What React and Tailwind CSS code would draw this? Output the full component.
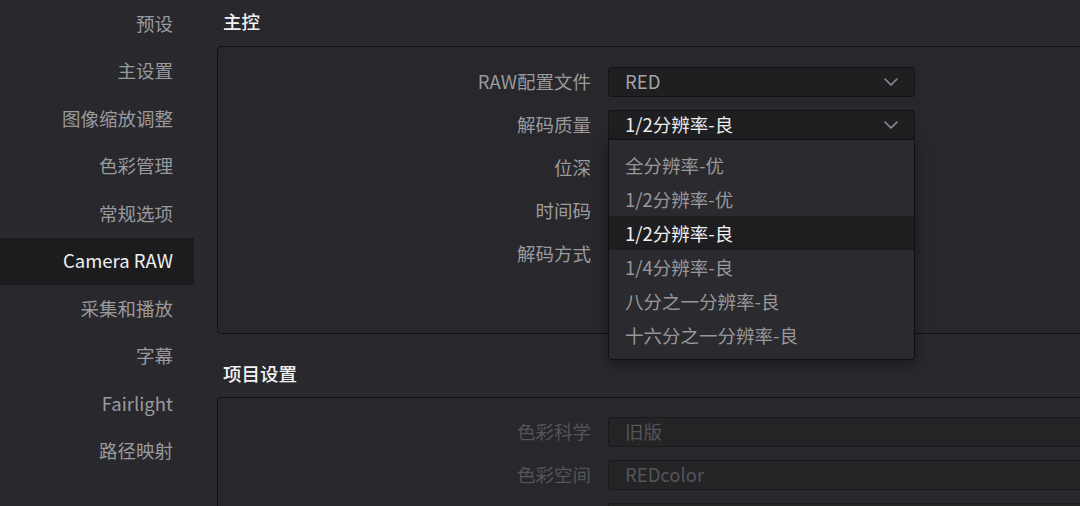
import { useState } from "react";

const navItems = [
  "预设",
  "主设置",
  "图像缩放调整",
  "色彩管理",
  "常规选项",
  "Camera RAW",
  "采集和播放",
  "字幕",
  "Fairlight",
  "路径映射",
];

const qualityOptions = [
  "全分辨率-优",
  "1/2分辨率-优",
  "1/2分辨率-良",
  "1/4分辨率-良",
  "八分之一分辨率-良",
  "十六分之一分辨率-良",
];

function Chevron() {
  return (
    <svg width="14" height="8" viewBox="0 0 14 8" fill="none">
      <polyline
        points="1,1 7,7 13,1"
        stroke="#8e8e92"
        strokeWidth="1.6"
        strokeLinecap="round"
        strokeLinejoin="round"
      />
    </svg>
  );
}

function Row({ label, children, dim }) {
  return (
    <div className="flex items-center h-[30px]">
      <div
        className={
          "w-[390px] shrink-0 pr-[17px] pb-[2px] text-right text-[18.5px] leading-none " +
          (dim ? "text-[#55555a]" : "text-[#9b9b9e]")
        }
      >
        {label}
      </div>
      {children}
    </div>
  );
}

function Select({ value, bright, children }) {
  return (
    <div className="relative">
      <div className="w-[307px] h-[30px] flex items-center justify-between pl-[16px] pr-[16px] bg-[#1f1f21] border border-[#131315] rounded-[3px]">
        <span
          className={
            "text-[18.5px] leading-none pb-[1px] " +
            (bright ? "text-[#ececec]" : "text-[#a3a3a6]")
          }
        >
          {value}
        </span>
        <Chevron />
      </div>
      {children}
    </div>
  );
}

export default function App() {
  const [selected] = useState(2);

  return (
    <div className="w-[1080px] h-[506px] overflow-hidden flex bg-[#28282d] font-['Noto_Sans_CJK_SC',sans-serif]">
      {/* sidebar */}
      <div className="w-[194px] shrink-0 flex flex-col">
        {navItems.map((item, i) => (
          <div
            key={item}
            className={
              "h-[47.5px] flex items-center justify-end pr-[21px] pb-[2px] text-[18.5px] leading-none " +
              (i === 5 ? "bg-[#1c1c1f] text-[#f0f0f0]" : "text-[#9a9a9d]")
            }
          >
            {item}
          </div>
        ))}
      </div>

      {/* main */}
      <div className="w-[1000px] shrink-0 pl-[23px]">
        <div className="h-[46px] flex items-center pl-[6px] pb-[3px] text-[18.5px] text-[#f2f2f2] font-medium leading-none">
          主控
        </div>
        <div className="h-[288px] border border-[#121214] rounded-[4px] bg-[#27272c] pt-[20px] flex flex-col gap-[13px]">
          <Row label="RAW配置文件">
            <Select value="RED" />
          </Row>
          <Row label="解码质量">
            <Select value="1/2分辨率-良" bright>
              <div className="absolute left-0 top-[29px] z-10 w-[307px] h-[221px] pt-[8px] bg-[#2a2a2f] border border-[#111113] rounded-b-[3px] shadow-[0_4px_14px_rgba(0,0,0,0.35)]">
                {qualityOptions.map((opt, i) => (
                  <div
                    key={opt}
                    className={
                      "h-[34px] flex items-center pl-[16px] text-[18.5px] leading-none " +
                      (i === selected
                        ? "bg-[#1e1e20] text-[#f0f0f0]"
                        : "text-[#98989b]")
                    }
                  >
                    {opt}
                  </div>
                ))}
              </div>
            </Select>
          </Row>
          <Row label="位深" />
          <Row label="时间码" />
          <Row label="解码方式" />
        </div>

        <div className="h-[63px] flex items-end pb-[15px] pl-[6px] text-[18.5px] text-[#f2f2f2] font-medium leading-none">
          项目设置
        </div>
        <div className="h-[200px] border border-[#121214] rounded-[4px] bg-[#27272c] pt-[19px] flex flex-col gap-[13px]">
          <Row label="色彩科学" dim>
            <div className="w-[600px] h-[30px] flex items-center pl-[16px] pb-[1px] bg-[#242427] border border-[#1a1a1c] rounded-[3px] text-[18.5px] leading-none text-[#55555a]">
              旧版
            </div>
          </Row>
          <Row label="色彩空间" dim>
            <div className="w-[600px] h-[30px] flex items-center pl-[16px] pb-[1px] bg-[#242427] border border-[#1a1a1c] rounded-[3px] text-[18.5px] leading-none text-[#55555a]">
              REDcolor
            </div>
          </Row>
          <Row label="" dim>
            <div className="w-[600px] h-[30px] bg-[#242427] border border-[#1a1a1c] rounded-[3px]" />
          </Row>
        </div>
      </div>
    </div>
  );
}
